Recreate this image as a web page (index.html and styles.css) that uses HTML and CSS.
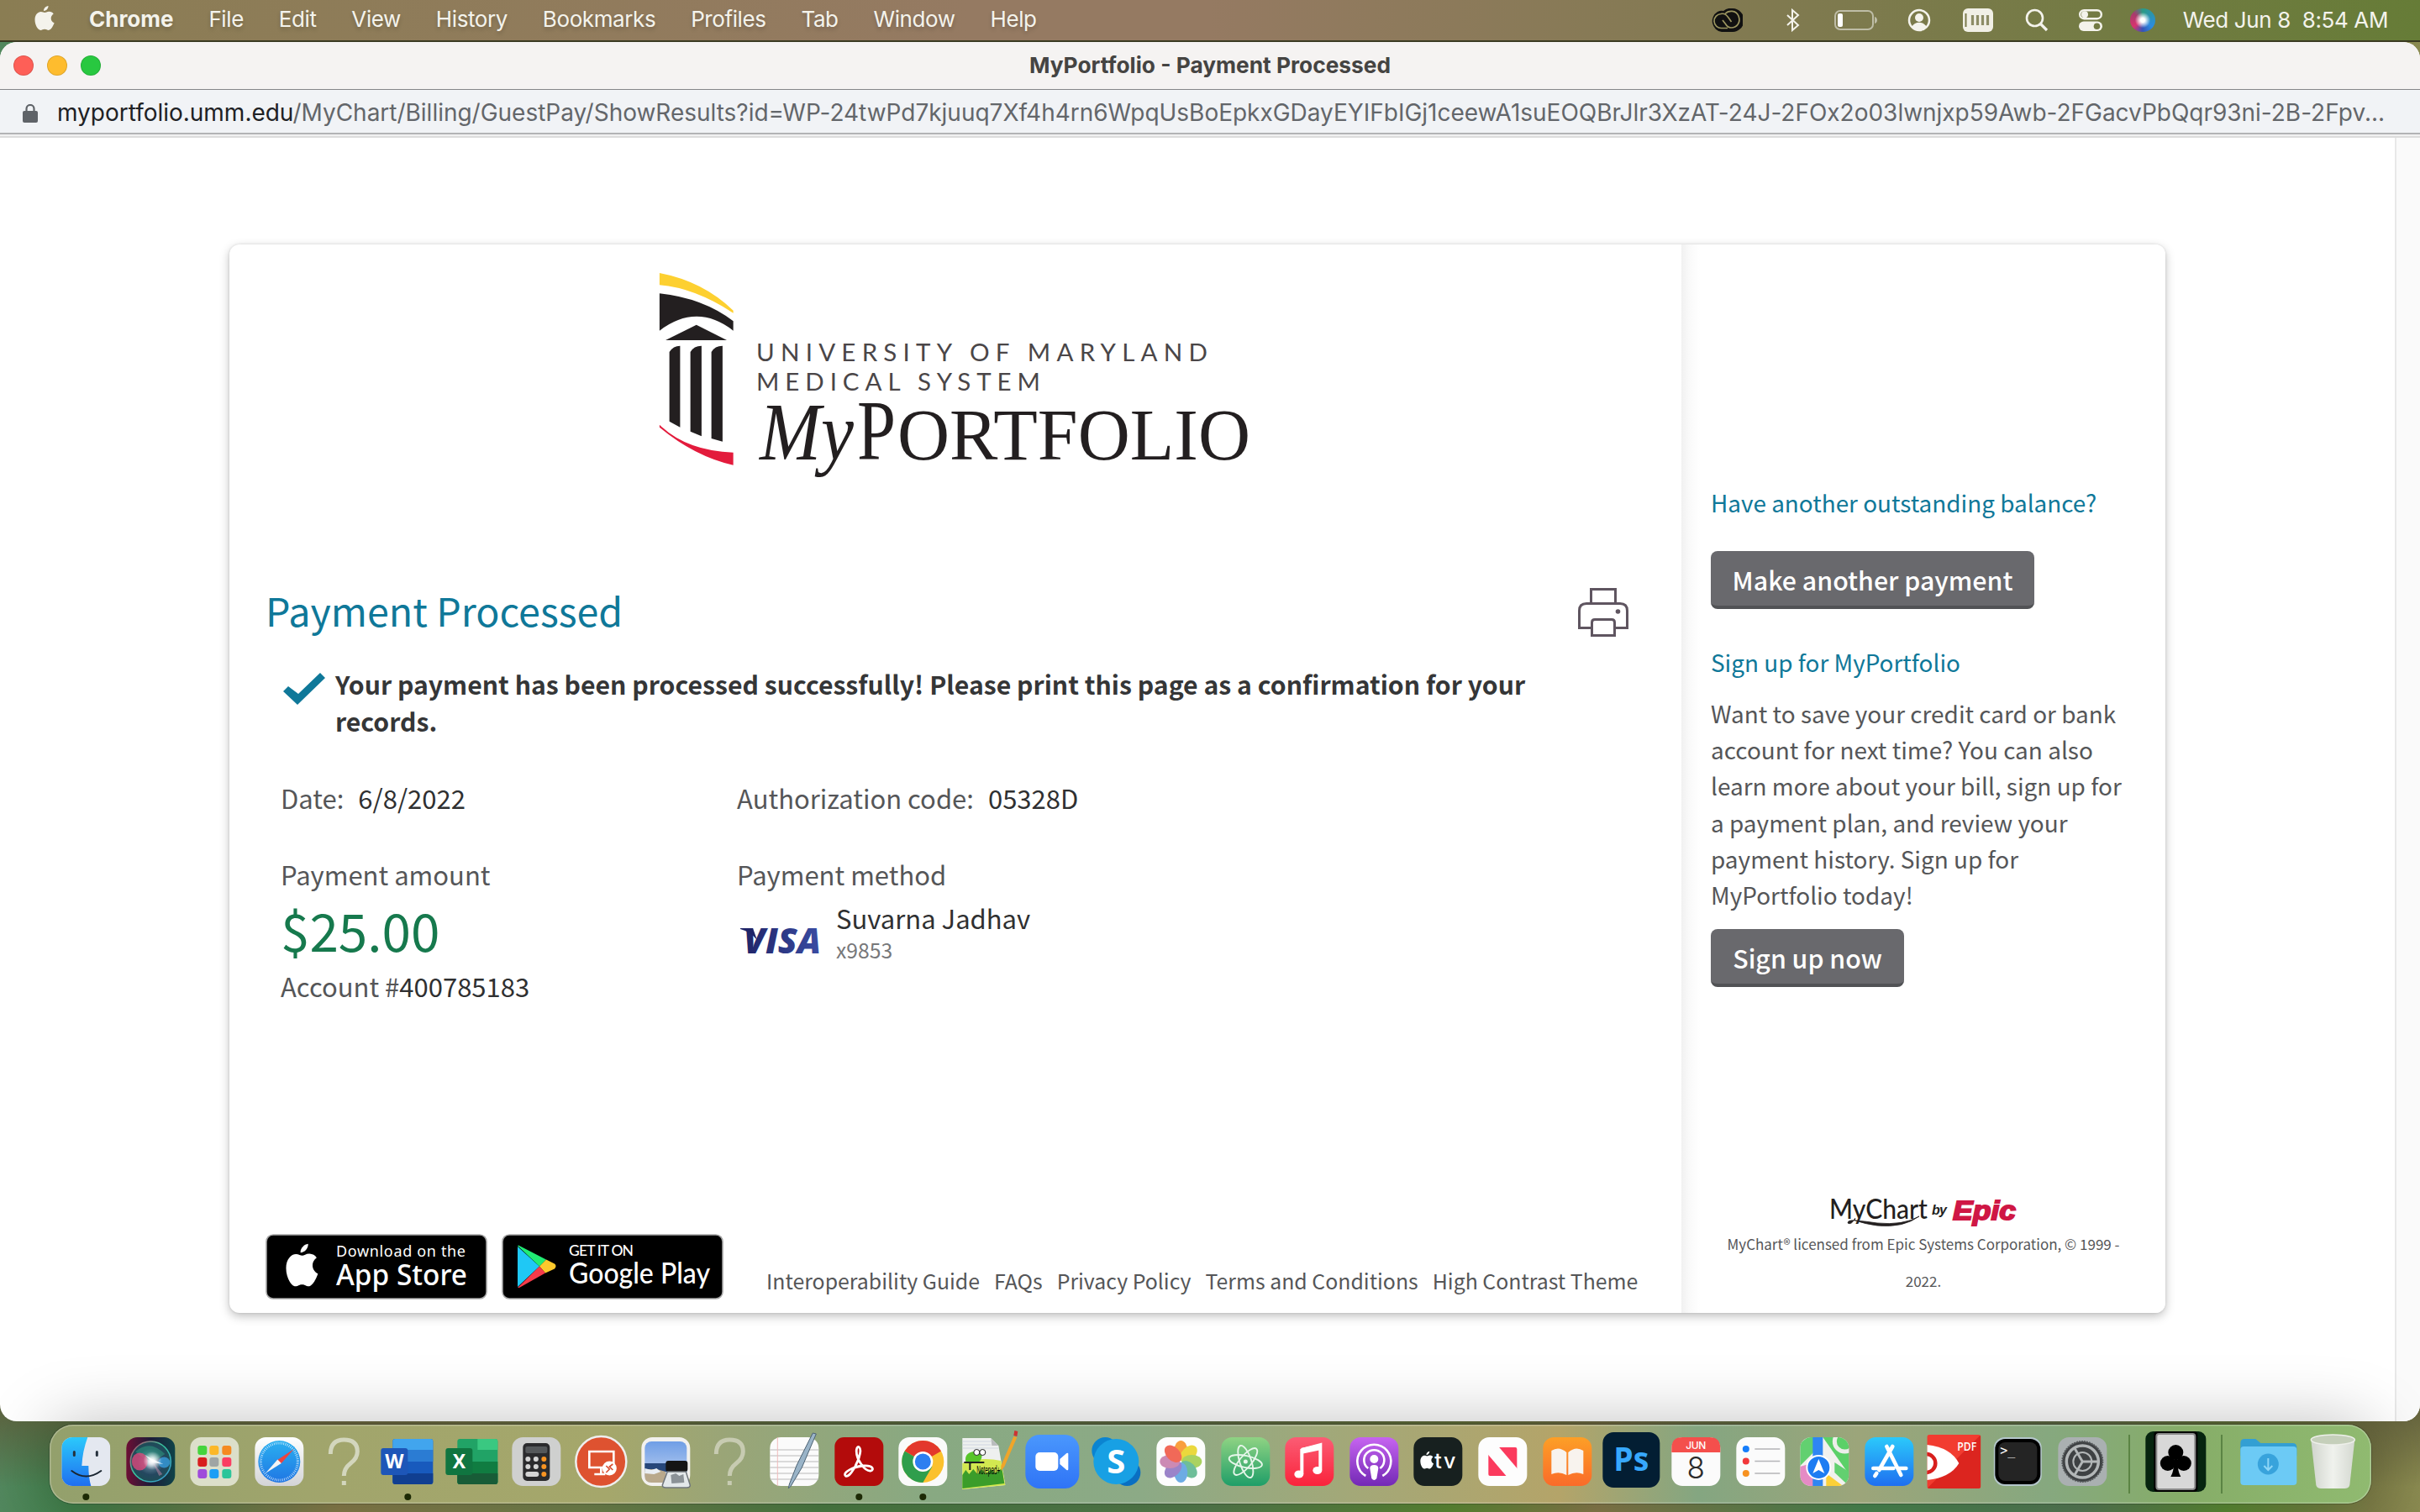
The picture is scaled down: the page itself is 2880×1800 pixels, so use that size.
FILE: index.html
```html
<!DOCTYPE html>
<html lang="en">
<head>
<meta charset="utf-8">
<title>MyPortfolio - Payment Processed</title>
<link rel="stylesheet" href="styles.css">
</head>
<body>
<div class="desktop">
  <header class="menubar">
    <svg class="apple" viewBox="0 0 26 32"><path d="M17.500 1c.2 3-2.600 6-5.500 6C11.700 4.300 14.500 1.300 17.500 1zM13.200 9c1.200 0 2.900-1.400 5.300-1.300 2.200.1 4.100 1 5.200 2.700-4.500 2.900-3.700 9 .9 10.900-1 3-3.800 8.500-6.800 8.600-1.800 0-2.400-1.200-4.700-1.200s-3 1.200-4.700 1.200C5 30 1.500 23.500 1.500 17.500 1.500 11.500 5.200 8 8.700 8c2 0 3.400 1 4.500 1z"/></svg>
    <nav class="menus">
      <span class="app">Chrome</span><span>File</span><span>Edit</span><span>View</span><span>History</span><span>Bookmarks</span><span>Profiles</span><span>Tab</span><span>Window</span><span>Help</span>
    </nav>
    <div class="status">
      <svg class="cc" viewBox="0 0 38 28"><path d="M13 28A13 13 0 0 1 8 4Q12 2 15 3 20-1 26 0A14 14 0 0 1 25 28z" fill="#111"/><g fill="none" stroke="#9c9660" stroke-width="1.700"><path d="M20 23.500H13a8.500 8.500 0 0 1-1-17C16 5.500 19 8 21 11l3.500 5"/><path d="M17 6.500c4-4.500 13-4.500 16 2.500 3 8-2 14-9 14-3 0-5-2-6.500-4.500L14 14"/></g></svg>
      <svg class="bt" viewBox="0 0 18 28"><path d="M2 8l13 12-7 6V2l7 6L2 20" fill="none" stroke="#f4f3ec" stroke-width="2"/></svg>
      <svg class="bat" viewBox="0 0 52 24"><rect x="1" y="1" width="45" height="22" rx="6" fill="none" stroke="#fff" stroke-opacity=".5" stroke-width="2"/><rect x="4" y="4" width="6" height="16" rx="2" fill="#fff"/><path d="M48 8c4 1 4 7 0 8z" fill="#fff" fill-opacity=".5"/></svg>
      <svg class="usr" viewBox="0 0 28 28"><circle cx="14" cy="14" r="12" fill="none" stroke="#f4f3ec" stroke-width="2.500"/><circle cx="14" cy="11" r="5" fill="#f4f3ec"/><path d="M5 22c4-7 14-7 18 0-4 5-14 5-18 0z" fill="#f4f3ec"/></svg>
      <svg class="kbd" viewBox="0 0 36 28"><rect width="36" height="28" rx="6" fill="#f1f0e6"/><path d="M3.500 6v16" stroke="#7b7b4d" stroke-width="2"/><path d="M11.500 8v12M17.500 8v12M23.500 8v12M29.500 8v12" stroke="#8d8d66" stroke-width="3.200"/></svg>
      <svg class="mag" viewBox="0 0 28 28"><circle cx="11.500" cy="11.500" r="9.500" fill="none" stroke="#f4f3ec" stroke-width="2.600"/><path d="M18 18l8 8" stroke="#f4f3ec" stroke-width="3.200"/></svg>
      <svg class="ctl" viewBox="0 0 28 26"><rect x="1.200" y="1.200" width="25.600" height="10" rx="5" fill="none" stroke="#f4f3ec" stroke-width="2.400"/><circle cx="7" cy="6.200" r="4" fill="#f4f3ec"/><rect y="14.500" width="28" height="11.500" rx="5.700" fill="#f4f3ec"/><circle cx="21.500" cy="20.200" r="3.800" fill="#737a44"/></svg>
      <i class="siri-dot"></i>
      <span class="clock">Wed Jun 8&nbsp; 8:54 AM</span>
    </div>
  </header>

  <section class="window">
    <div class="titlebar">
      <div class="lights"><i class="red"></i><i class="amber"></i><i class="green"></i></div>
      <h1 class="wtitle">MyPortfolio - Payment Processed</h1>
      <div class="lights-end"></div>
    </div>
    <div class="urlbar">
      <svg class="lock" viewBox="0 0 18 22"><rect x="0" y="8" width="18" height="14" rx="2" fill="#5f6368"/><path d="M4.500 9V5.500a4.500 4.500 0 0 1 9 0V9" fill="none" stroke="#5f6368" stroke-width="2.200"/></svg>
      <span class="url"><b>myportfolio.umm.edu</b><span>/MyChart/Billing/GuestPay/ShowResults?id=WP-24twPd7kjuuq7Xf4h4rn6WpqUsBoEpkxGDayEYIFbIGj1ceewA1suEOQBrJlr3XzAT-24J-2FOx2o03lwnjxp59Awb-2FGacvPbQqr93ni-2B-2Fpv...</span></span>
    </div>
    <div class="viewport">
      <div class="page">
        <div class="card">
          <main class="main">
            <svg class="logo" viewBox="0 0 800 300">
              <g transform="scale(.5102 .33333)">
                <path d="M88 75Q190 105 260 209V218Q170 128 88 118z" fill="#fdd030"/>
                <path d="M88 148Q190 165 260 247V281Q175 180 88 281z" fill="#231f20"/>
                <path d="M174 260L245 315H102z" fill="#231f20"/>
                <path d="M111 357Q120 335 136 335V626L111 605zM160 357Q168 335 186 335V658L160 641zM209 357Q217 335 235 335V677L209 666z" fill="#231f20"/>
                <path d="M88 617Q150 710 260 716V761Q170 730 88 626z" fill="#e31b3c"/>
              </g>
              <g fill="#4a4648" font-family="Lato, sans-serif" font-size="29.500">
                <text x="160" y="129.500" textLength="537">UNIVERSITY OF MARYLAND</text>
                <text x="160" y="165" textLength="338">MEDICAL SYSTEM</text>
              </g>
              <g fill="#231f20" font-family="'Liberation Serif', serif">
                <text x="164" y="246.500" font-size="97" font-style="italic" textLength="112" lengthAdjust="spacingAndGlyphs">My</text>
                <text x="280" y="246.500" font-size="101" textLength="46" lengthAdjust="spacingAndGlyphs">P</text>
                <text x="328" y="246.500" font-size="87" textLength="420" lengthAdjust="spacingAndGlyphs">ORTFOLIO</text>
              </g>
            </svg>
            <div class="head">
              <h2>Payment Processed</h2>
              <svg class="printer" viewBox="0 0 60 58"><g fill="none" stroke="#5f5560" stroke-width="3"><path d="M15.500 18V1.500h29V18"/><path d="M15 47.500H1.500V27q0-8.500 8.500-8.500h40q8.500 0 8.500 8.500v20.500H45"/><path d="M16.500 56.500V41q0-3.500 3.500-3.500h20q3.500 0 3.500 3.500v15.500z"/></g><circle cx="47.500" cy="28" r="2.800" fill="#5f5560"/></svg>
            </div>
            <div class="msg">
              <svg class="check" viewBox="0 0 50 38"><path d="M0 22l6-6 12 9L44 0l6 6-33 32z" fill="#0f7899"/></svg>
              <p>Your payment has been processed successfully! Please print this page as a confirmation for your<br>records.</p>
            </div>
            <div class="details">
              <div class="row"><span>Date:</span><span class="v">6/8/2022</span></div>
              <div class="row"><span>Authorization code:</span><span class="v">05328D</span></div>
              <div class="amount">
                <div>Payment amount</div>
                <div class="sum">$25.00</div>
                <div class="acct">Account #<span class="v">400785183</span></div>
              </div>
              <div class="method">
                <div>Payment method</div>
                <div class="payer">
                  <svg class="visa" viewBox="0 0 96 34"><defs><linearGradient id="vg"><stop offset="0" stop-color="#1f2468"/><stop offset="1" stop-color="#3a4ca3"/></linearGradient></defs><text x="4" y="32" textLength="92" lengthAdjust="spacingAndGlyphs" fill="url(#vg)" font-family="'Open Sans', sans-serif" font-weight="800" font-style="italic" font-size="42">VISA</text><path d="M0 2h15l5 14Q12 6 0 3z" fill="#1f2468"/></svg>
                  <div><div class="name v">Suvarna Jadhav</div><div class="last4">x9853</div></div>
                </div>
              </div>
            </div>
            <footer class="foot">
              <div class="badge"><svg viewBox="0 0 264 78"><rect x="1" y="1" width="262" height="76" rx="8" fill="#000" stroke="#a6a6a6" stroke-width="1.600"/><path transform="translate(22 10) scale(1.640 1.750)" fill="#fff" d="M17.500 1c.2 3-2.600 6-5.500 6C11.700 4.300 14.500 1.300 17.500 1zM13.200 9c1.200 0 2.900-1.400 5.300-1.300 2.200.1 4.100 1 5.200 2.700-4.500 2.900-3.700 9 .9 10.900-1 3-3.800 8.500-6.800 8.600-1.800 0-2.400-1.200-4.700-1.200s-3 1.200-4.700 1.200C5 30 1.500 23.500 1.500 17.500 1.500 11.500 5.200 8 8.700 8c2 0 3.400 1 4.500 1z"/><g fill="#fff" font-family="'Noto Sans', sans-serif"><text x="84" y="26.500" font-size="18" textLength="154">Download on the</text><text x="84" y="61" font-size="35" font-weight="500" textLength="156" lengthAdjust="spacingAndGlyphs">App Store</text></g></svg></div>
              <div class="badge"><svg viewBox="0 0 264 78"><rect x="1" y="1" width="262" height="76" rx="8" fill="#000" stroke="#a6a6a6" stroke-width="1.600"/><path d="M19 15v48l26-24.500z" fill="#1fc8f5"/><path d="M19 14l1-.5 33 17-8 8z" fill="#20ec74"/><path d="M45 38.500l8-8 10 5q3 2.500 0 6l-11 5z" fill="#fdc92c"/><path d="M19 64l26-25.500 7 8L21 64z" fill="#f43b4a"/><g fill="#fff" font-family="Lato, sans-serif" font-weight="500"><text x="80" y="26" font-size="17.500" textLength="77">GET IT ON</text><text x="80" y="59" font-size="34" textLength="168" lengthAdjust="spacingAndGlyphs">Google Play</text></g></svg></div>
              <nav class="links"><span>Interoperability Guide</span><span>FAQs</span><span>Privacy Policy</span><span>Terms and Conditions</span><span>High Contrast Theme</span></nav>
            </footer>
          </main>
          <aside class="side">
            <h3>Have another outstanding balance?</h3>
            <button class="btn b1">Make another payment</button>
            <h3 class="second">Sign up for MyPortfolio</h3>
            <p>Want to save your credit card or bank<br>account for next time? You can also<br>learn more about your bill, sign up for<br>a payment plan, and review your<br>payment history. Sign up for<br>MyPortfolio today!</p>
            <button class="btn b2">Sign up now</button>
            <div class="legal">
              <svg class="epic" viewBox="0 0 224 32"><text x="0" y="24" font-family="Lato, sans-serif" font-weight="500" font-size="33" fill="#231f20" textLength="117" lengthAdjust="spacingAndGlyphs">MyChart</text><path d="M31 23q-5 9-9 6 0-4 10-3 12 1 25 3 31 3 50-8-19 14-50 11-15-2-26-6" fill="#231f20" stroke="#231f20" stroke-width=".8"/><text x="122" y="18.500" font-family="'Liberation Sans', sans-serif" font-weight="700" font-style="italic" font-size="16" fill="#231f20" textLength="18">by</text><text x="147" y="25" font-family="'Liberation Sans', sans-serif" font-weight="700" font-style="italic" font-size="31" fill="#cf1745" stroke="#cf1745" stroke-width="1.800" textLength="75" lengthAdjust="spacingAndGlyphs">Epic</text></svg>
              <div class="lic">MyChart® licensed from Epic Systems Corporation, © 1999 -<br>2022.</div>
            </div>
          </aside>
        </div>
      </div>
      <div class="scroll"></div>
    </div>
  </section>

  <div class="dock">
    <svg viewBox="0 0 76 94"><defs>
      <linearGradient id="gBlue" x2="0" y2="1"><stop stop-color="#2bc9fb"/><stop offset="1" stop-color="#1f6ff0"/></linearGradient>
      <radialGradient id="gSiri"><stop stop-color="#c9d4e6"/><stop offset=".3" stop-color="#55788f"/><stop offset=".65" stop-color="#24475f"/><stop offset="1" stop-color="#1d4d56"/></radialGradient>
      <radialGradient id="gGlow"><stop stop-color="#fff"/><stop offset=".3" stop-color="#fff" stop-opacity=".8"/><stop offset="1" stop-color="#fff" stop-opacity="0"/></radialGradient>
      <linearGradient id="gSiriRing" x2="1" y2="1"><stop stop-color="#c23a62"/><stop offset=".45" stop-color="#35c9a0"/><stop offset="1" stop-color="#3a8fd0"/></linearGradient>
      <linearGradient id="gSiriBg"><stop stop-color="#6d0f35"/><stop offset=".5" stop-color="#1d1c38"/><stop offset="1" stop-color="#0e4349"/></linearGradient>
      <linearGradient id="gRed" x2="0" y2="1"><stop stop-color="#fb5c74"/><stop offset="1" stop-color="#fa233b"/></linearGradient>
      <linearGradient id="gGreen" x2="0" y2="1"><stop stop-color="#8fd383"/><stop offset="1" stop-color="#1f9e68"/></linearGradient>
      <linearGradient id="gPurple" x2="0" y2="1"><stop stop-color="#c664f0"/><stop offset="1" stop-color="#7329b5"/></linearGradient>
      <linearGradient id="gOrange" x2="0" y2="1"><stop stop-color="#fd9f26"/><stop offset="1" stop-color="#fa6b2a"/></linearGradient>
      <linearGradient id="gZoom" x2="0" y2="1"><stop stop-color="#4a97fd"/><stop offset="1" stop-color="#2f74f6"/></linearGradient>
      <linearGradient id="gTrash"><stop stop-color="#d4d6d2"/><stop offset=".5" stop-color="#f5f5f4"/><stop offset="1" stop-color="#d8dad6"/></linearGradient>
      <linearGradient id="gWhite" x2="0" y2="1"><stop stop-color="#fff"/><stop offset="1" stop-color="#d3d4d6"/></linearGradient>
      <linearGradient id="gSafari" x2="0" y2="1"><stop stop-color="#2bb0f0"/><stop offset="1" stop-color="#1f76e4"/></linearGradient>
      <linearGradient id="gSky" x2="0" y2="1"><stop stop-color="#6f9ee6"/><stop offset="1" stop-color="#c3d4f0"/></linearGradient>
      <clipPath id="sq"><rect x="9" y="15" width="58" height="58" rx="13"/></clipPath>
      <clipPath id="pdf"><rect x="6" y="12" width="64" height="64" rx="3"/></clipPath></defs>
      <g clip-path="url(#sq)"><path d="M9 15h58v58H9z" fill="#e4e8f0"/><path d="M9 15h31q-6 16-7 34h8q0 14 3 24H9z" fill="url(#gBlue)"/></g><path d="M24 32.500v4M51 32.500v4" stroke="#26313c" stroke-width="3" stroke-linecap="round"/><path d="M21 55q17 13 35 0" fill="none" stroke="#1a2530" stroke-width="2" stroke-linecap="round"/><circle class="run" cx="38" cy="86" r="4"/></svg>
    <svg viewBox="0 0 76 94"><rect x="9" y="15" width="58" height="58" rx="13" fill="url(#gSiriBg)"/><circle cx="38" cy="44" r="24" fill="url(#gSiri)" stroke="url(#gSiriRing)" stroke-width="1.600"/><path d="M20 32q17-15 35 3-8 6-15 8-12-2-20-11z" fill="#2fae86" opacity=".45"/><ellipse cx="25" cy="44" rx="9.500" ry="10.500" fill="#e8487e" opacity=".75"/><ellipse cx="54" cy="45" rx="7" ry="6.500" fill="#3aa8f0" opacity=".7"/><path d="M40 44l12 15-4 2z" fill="#c58aa8" opacity=".5"/><circle cx="40" cy="43" r="11" fill="url(#gGlow)"/><path d="M31 36l9 5 13 6-13-2z" fill="#fff" opacity=".8"/></svg>
    <svg viewBox="0 0 76 94"><rect x="9" y="15" width="58" height="58" rx="13" fill="#dcdfca"/><g><rect x="18" y="25" width="11" height="11" rx="3" fill="#45d43d"/><rect x="32" y="25" width="11" height="11" rx="3" fill="#fcb827"/><rect x="47" y="25" width="11" height="11" rx="3" fill="#f58a20"/><rect x="18" y="39" width="11" height="11" rx="3" fill="#d81e1e"/><rect x="32" y="39" width="11" height="11" rx="3" fill="#9fa5a4"/><rect x="47" y="39" width="11" height="11" rx="3" fill="#fb3e62"/><rect x="18" y="53" width="11" height="11" rx="3" fill="#9f4bdb"/><rect x="32" y="53" width="11" height="11" rx="3" fill="#1c9ef5"/><rect x="47" y="53" width="11" height="11" rx="3" fill="#2bc59a"/></g></svg>
    <svg viewBox="0 0 76 94"><rect x="9" y="15" width="58" height="58" rx="13" fill="url(#gWhite)"/><circle cx="38" cy="44" r="25" fill="url(#gSafari)"/><circle cx="38" cy="44" r="22" fill="none" stroke="#fff" stroke-opacity=".75" stroke-width="3" stroke-dasharray=".8 1.500"/><path d="M55.500 29L36 42l4 4.500z" fill="#f0433d"/><path d="M21.500 58L36 41.500l4.500 4.500z" fill="#f4f4f4"/></svg>
    <svg viewBox="0 0 76 94"><path d="M22 35q0-17 16-17t16 14q0 8-8 14-8 6-8 15M38 67v5" fill="none" stroke="#d3d6bd" stroke-width="5"/></svg>
    <svg viewBox="0 0 76 94"><rect x="20" y="17" width="48" height="54" rx="3" fill="#185abd"/><path d="M20 30V20q0-3 3-3h42q3 0 3 3v10z" fill="#41a5ee"/><path d="M20 30h48v14H20z" fill="#2b7cd3"/><path d="M20 58h48v10q0 3-3 3H23q-3 0-3-3z" fill="#103f91"/><rect x="6" y="28" width="32" height="32" rx="3" fill="#1d56b8"/><text x="22" y="52" text-anchor="middle" class="glyph" font-size="23">W</text><circle class="run" cx="38" cy="86" r="4"/></svg>
    <svg viewBox="0 0 76 94"><rect x="20" y="17" width="48" height="54" rx="3" fill="#21a366"/><path d="M44 17h21q3 0 3 3v10H44z" fill="#3ac881"/><path d="M20 44h48v24q0 3-3 3H23q-3 0-3-3z" fill="#107c41"/><path d="M20 58h48v10q0 3-3 3H23q-3 0-3-3z" fill="#185c37"/><rect x="6" y="28" width="32" height="32" rx="3" fill="#107540"/><text x="22" y="52" text-anchor="middle" class="glyph" font-size="23">X</text></svg>
    <svg viewBox="0 0 76 94"><rect x="9" y="15" width="58" height="58" rx="13" fill="#cfd0cf"/><rect x="22" y="22" width="32" height="45" rx="5" fill="#2b2b2d"/><rect x="25" y="26" width="26" height="8" rx="2" fill="#55585a"/><g fill="#d5d5d5"><circle cx="28" cy="41" r="3"/><circle cx="37.500" cy="41" r="3"/><circle cx="28" cy="50" r="3"/><circle cx="37.500" cy="50" r="3"/><rect x="25" y="56" width="16" height="6" rx="3"/></g><g fill="#f89422"><circle cx="47" cy="41" r="3"/><circle cx="47" cy="50" r="3"/><circle cx="47" cy="59" r="3"/></g></svg>
    <svg viewBox="0 0 76 94"><circle cx="38" cy="44" r="30" fill="#de5230" stroke="#eee" stroke-width="2.500"/><path d="M24 32h29v19H24zM38 51v7M30 59h13" fill="none" stroke="#fff" stroke-width="2.600"/><circle cx="48" cy="52" r="8.500" fill="#fff"/><path d="M44 49l4 4-4 4M52 47l-4 3 4 4" fill="none" stroke="#d64c30" stroke-width="1.600"/></svg>
    <svg viewBox="0 0 76 94"><rect x="9" y="15" width="58" height="58" rx="13" fill="#f2f1ee"/><rect x="13" y="20" width="50" height="49" rx="8" fill="url(#gSky)"/><path d="M13 46h50v10H13z" fill="#27477a"/><path d="M13 54q12-3 25 2v13H21q-8 0-8-8z" fill="#b9a98c"/><path d="M13 52l8 2 6-2 5 4-8 3-11-1z" fill="#e9eef3"/><rect x="38" y="43" width="26" height="13" rx="3" fill="#151515"/><path d="M40 56h22l5 16q0 3-4 3H38q-4 0-4-3z" fill="#e3e8ea" stroke="#70767b" stroke-width="1.500"/><path d="M44 60l6-2 4 3 5-2 1 10-15 1z" fill="#8b9297"/></svg>
    <svg viewBox="0 0 76 94"><path d="M22 35q0-17 16-17t16 14q0 8-8 14-8 6-8 15M38 67v5" fill="none" stroke="#c7cbb1" stroke-width="5"/></svg>
    <svg viewBox="0 0 76 94"><rect x="9" y="15" width="58" height="58" rx="13" fill="#fbfbfb"/><path d="M9 30h58M9 37h58M9 44h58M9 51h58M9 58h58M9 65h58" stroke="#b9b9b9" stroke-width="1"/><path d="M18 15v58" stroke="#f0bcbc"/><path d="M60 10l4 1-17 40-13 22-3 3 1-5 9-23z" fill="#9ab4c8" stroke="#4c6273" stroke-width="1"/></svg>
    <svg viewBox="0 0 76 94"><rect x="9" y="15" width="58" height="58" rx="11" fill="#b30b0b"/><path d="M22 61c-4-4 9-11 21-12s13 5 9 6c-7 1-18-14-17-25 1-7 6-3 4 5-2 10-12 29-17 26z" fill="none" stroke="#fff" stroke-width="2.800"/><circle class="run" cx="38" cy="86" r="4"/></svg>
    <svg viewBox="0 0 76 94"><rect x="9" y="15" width="58" height="58" rx="13" fill="#fafafa"/><circle cx="38" cy="44" r="25" fill="#fbc12d"/><path d="M38 44L16.300 31.500a25 25 0 0 1 43.400 0z" fill="#e3382c"/><path d="M16.300 31.500A25 25 0 0 0 38 69l11-19-11-6z" fill="#2f9e4c"/><path d="M16.300 31.500L38 32h21.700z" fill="#e3382c"/><circle cx="38" cy="44" r="12" fill="#fff"/><circle cx="38" cy="44" r="9.500" fill="#2d7ff0"/><circle class="run" cx="38" cy="86" r="4"/></svg>
    <svg viewBox="0 0 76 94"><path d="M8 16h34l9 9 8 47-51 5z" fill="#eef0ef"/><path d="M42 16l9 9h-8z" fill="#b9bcbd"/><path d="M8 20h34M8 24h34M8 28h43" stroke="#cfd6e0"/><path d="M8 46q22-8 46-3l5 29-51 5z" fill="#d3e850"/><path d="M8 60l4-6 4 5 5-6 5 6 5-6 5 6 6-6 5 5 8-6 3 18-50 6z" fill="#3b9d2a"/><path d="M12 44q-2-10 9-12 12-2 10 7-2 8-10 6-3 4-9-1z" fill="#58c52a"/><circle cx="25" cy="33" r="3.500" fill="#fff" stroke="#222"/><circle cx="32" cy="33" r="3.500" fill="#fff" stroke="#222"/><path d="M10 45h24M17 46v8" stroke="#222" stroke-width="2"/><text x="25" y="59" font-size="15" font-family="'Liberation Sans', sans-serif" textLength="28" lengthAdjust="spacingAndGlyphs">Notepad+</text><path d="M69 14l4 1-15 35-4 5v-6z" fill="#f0a529"/><path d="M70 7l4 1-1 6-4-1z" fill="#c33"/></svg>
    <svg viewBox="0 0 76 94"><rect x="6" y="12" width="64" height="64" rx="17" fill="url(#gZoom)"/><rect x="18" y="33" width="27" height="22" rx="5" fill="#fff"/><path d="M47 41l8-7q2-1 2 1v18q0 2-2 1l-8-7z" fill="#fff"/></svg>
    <svg viewBox="0 0 76 94"><circle cx="25" cy="31" r="16" fill="#0b84d1"/><circle cx="51" cy="57" r="16" fill="#0a6fc2"/><circle cx="38" cy="44" r="27" fill="#18a0e4"/><text x="38" y="58" text-anchor="middle" class="glyph" font-size="40">S</text></svg>
    <svg viewBox="0 0 76 94"><rect x="9" y="15" width="58" height="58" rx="13" fill="#fdfdfd"/><g opacity=".85"><ellipse cx="38" cy="31" rx="8" ry="12" fill="#f98f1e"/><ellipse cx="38" cy="31" rx="8" ry="12" fill="#e8d21c" transform="rotate(45 38 44)"/><ellipse cx="38" cy="31" rx="8" ry="12" fill="#9ccb45" transform="rotate(90 38 44)"/><ellipse cx="38" cy="31" rx="8" ry="12" fill="#56b488" transform="rotate(135 38 44)"/><ellipse cx="38" cy="31" rx="8" ry="12" fill="#559fe0" transform="rotate(180 38 44)"/><ellipse cx="38" cy="31" rx="8" ry="12" fill="#8a6fc0" transform="rotate(225 38 44)"/><ellipse cx="38" cy="31" rx="8" ry="12" fill="#c476a8" transform="rotate(270 38 44)"/><ellipse cx="38" cy="31" rx="8" ry="12" fill="#f0503c" transform="rotate(315 38 44)"/></g></svg>
    <svg viewBox="0 0 76 94"><rect x="9" y="15" width="58" height="58" rx="13" fill="url(#gGreen)"/><g fill="none" stroke="#e6f6ea" stroke-width="1.900"><ellipse cx="38" cy="44" rx="20" ry="7" transform="rotate(12 38 44)"/><ellipse cx="38" cy="44" rx="20" ry="7" transform="rotate(72 38 44)"/><ellipse cx="38" cy="44" rx="20" ry="7" transform="rotate(130 38 44)"/></g><circle cx="38" cy="44" r="2.500" fill="#e6f6ea"/></svg>
    <svg viewBox="0 0 76 94"><rect x="9" y="15" width="58" height="58" rx="13" fill="url(#gRed)"/><path d="M29 30l22-6v30M29 59V29" fill="none" stroke="#fff" stroke-width="4"/><path d="M28 28l24-5v7l-24 5z" fill="#fff"/><ellipse cx="25.500" cy="59" rx="5.500" ry="4.500" fill="#fff"/><ellipse cx="47.500" cy="54.500" rx="5.500" ry="4.500" fill="#fff"/></svg>
    <svg viewBox="0 0 76 94"><rect x="9" y="15" width="58" height="58" rx="13" fill="url(#gPurple)"/><g fill="none" stroke="#fff" stroke-width="2.600"><path d="M28 61a20 20 0 1 1 20 0"/><path d="M31 52a12 12 0 1 1 14 0"/></g><circle cx="38" cy="41" r="5" fill="#fff"/><path d="M33 52q0-4 5-4t5 4l-2 12q-3 4-6 0z" fill="#fff"/></svg>
    <svg viewBox="0 0 76 94"><rect x="9" y="15" width="58" height="58" rx="13" fill="#17201f"/><path transform="translate(16 31) scale(.68 .72)" fill="#fff" d="M17.500 1c.2 3-2.600 6-5.500 6C11.700 4.300 14.500 1.300 17.500 1zM13.200 9c1.200 0 2.900-1.400 5.300-1.300 2.200.1 4.100 1 5.200 2.700-4.500 2.900-3.700 9 .9 10.900-1 3-3.800 8.500-6.800 8.600-1.800 0-2.400-1.200-4.700-1.200s-3 1.200-4.700 1.200C5 30 1.500 23.500 1.500 17.500 1.500 11.500 5.200 8 8.700 8c2 0 3.400 1 4.500 1z"/><text x="34" y="52" fill="#fff" font-family="Inter, sans-serif" font-weight="500" font-size="25" textLength="25">tv</text></svg>
    <svg viewBox="0 0 76 94"><rect x="9" y="15" width="58" height="58" rx="13" fill="#fdfdfd"/><rect x="21" y="27" width="34" height="34" rx="2" fill="#fb3a5d"/><path d="M20 26h13l23 27v9H43L20 35z" fill="#fdfdfd"/></svg>
    <svg viewBox="0 0 76 94"><rect x="9" y="15" width="58" height="58" rx="13" fill="url(#gOrange)"/><path d="M37 33q-9-8-18-2v28q9-4 18 1zM39 33q9-8 18-2v28q-9-4-18 1z" fill="#f8f3ee"/></svg>
    <svg viewBox="0 0 76 94"><rect x="4" y="9" width="68" height="66" rx="13" fill="#031e33"/><text x="38" y="55" text-anchor="middle" fill="#37a8fd" font-family="'Open Sans', sans-serif" font-weight="700" font-size="40" textLength="42" lengthAdjust="spacingAndGlyphs">Ps</text></svg>
    <svg viewBox="0 0 76 94"><rect x="9" y="15" width="58" height="58" rx="13" fill="#fbfbfb"/><path d="M9 33v-5q0-13 13-13h32q13 0 13 13v5z" fill="#f44f4c"/><text x="38" y="29" text-anchor="middle" fill="#fff" font-family="Inter, sans-serif" font-weight="500" font-size="12" textLength="24">JUN</text><text x="38" y="64" text-anchor="middle" fill="#2b2b2b" font-family="Inter, sans-serif" font-weight="300" font-size="35">8</text></svg>
    <svg viewBox="0 0 76 94"><rect x="9" y="15" width="58" height="58" rx="13" fill="#fbfbfb"/><path d="M31 29h30M31 43.500h30M31 58h30" stroke="#b5b5b8" stroke-width="1.400"/><circle cx="20.500" cy="29" r="4" fill="#167efb"/><circle cx="20.500" cy="43.500" r="4" fill="#f2383b"/><circle cx="20.500" cy="58" r="4" fill="#f79221"/></svg>
    <svg viewBox="0 0 76 94"><g clip-path="url(#sq)"><path d="M9 15h58v58H9z" fill="#f1f1ee"/><path d="M36 15h31v44z" fill="#5bd068"/><path d="M9 22v27l17-17V15h-8z" fill="#62d070"/><path d="M9 50l26-8v31H9z" fill="#e58bc5"/><path d="M40 73V58l20 15z" fill="#fbd038"/><path d="M67 73V56L50 45v12z" fill="#62d070"/><path d="M24 15h12v58H24z" fill="#2f86f2"/><circle cx="62" cy="20" r="12" fill="none" stroke="#eceeea" stroke-width="5"/></g><circle cx="31" cy="51" r="14" fill="#1d7cf2" stroke="#fff" stroke-width="2"/><path d="M31 41l7 17-7-4-7 4z" fill="#fff"/></svg>
    <svg viewBox="0 0 76 94"><rect x="9" y="15" width="58" height="58" rx="13" fill="url(#gBlue)"/><path d="M42 26L26 54M35 26l17 34M19 52h24M49 52h9M23 58l-2 3" stroke="#fff" stroke-width="4.600" stroke-linecap="round"/></svg>
    <svg viewBox="0 0 76 94"><g clip-path="url(#pdf)"><path d="M6 12h64v64H6z" fill="#f23c30"/><path d="M6 76l64-64v64z" fill="#dc251f"/><path d="M6 24q28 3 38 22-10 17-38 20z" fill="#fff"/><circle cx="5" cy="46" r="11" fill="none" stroke="#d81f1d" stroke-width="4.500"/></g><text x="42" y="31" fill="#fff" font-family="'Open Sans', sans-serif" font-weight="600" font-size="15" textLength="23" lengthAdjust="spacingAndGlyphs">PDF</text></svg>
    <svg viewBox="0 0 76 94"><rect x="9.500" y="15" width="57" height="58" rx="13" fill="#b4c6cb"/><rect x="11" y="17" width="54" height="54" rx="12" fill="#000"/><rect x="15" y="21" width="46" height="46" rx="8" fill="#242424"/><text x="17" y="36" fill="#fff" font-family="'DejaVu Sans Mono', monospace" font-size="15">&gt;_</text></svg>
    <svg viewBox="0 0 76 94"><rect x="9" y="15" width="58" height="58" rx="13" fill="#aab0b1"/><circle cx="38" cy="44" r="24" fill="#3e4143" stroke="#55595b" stroke-width="2" stroke-dasharray="2 1"/><g fill="none" stroke="#b2b6b7"><circle cx="38" cy="44" r="19" stroke-width="3.500"/><circle cx="38" cy="44" r="11" stroke-width="2"/><path d="M38 44h19M38 44l-10-17M38 44l-10 17" stroke-width="3"/></g></svg>
    <i class="sep"></i>
    <svg viewBox="0 0 76 94"><rect x="2" y="8" width="72" height="72" rx="9" fill="#06240f"/><rect x="12" y="8" width="52" height="72" rx="4" fill="#000"/><rect x="15" y="11" width="46" height="66" rx="3" fill="#d8d8d8" stroke="#888" stroke-width="2"/><g fill="#000"><circle cx="38" cy="33" r="9"/><circle cx="28.500" cy="46" r="9"/><circle cx="47.500" cy="46" r="9"/><path d="M36 40h4q0 16 4 22H32q4-6 4-22z"/></g></svg>
    <i class="sep"></i>
    <svg viewBox="0 0 76 94"><path d="M5 22q0-5 5-5h13l6 5h38q5 0 5 5v10H5z" fill="#339fd3"/><rect x="5" y="26" width="67" height="46" rx="4" fill="#6ccaf5"/><circle cx="38" cy="47" r="12.500" fill="#38a3dc"/><path d="M38 40v13M33 49l5 5 5-5" fill="none" stroke="#8ed6f7" stroke-width="2"/></svg>
    <svg viewBox="0 0 76 94"><path d="M12 18h52l-6 54q-1 4-6 4H24q-5 0-6-4z" fill="url(#gTrash)" opacity=".95"/><ellipse cx="38" cy="18" rx="26" ry="6" fill="#c5cfba" stroke="#eef0ea" stroke-width="1.500"/></svg>
  </div>
</div>
</body>
</html>
```
FILE: styles.css
```css
* { box-sizing: border-box; }
body { margin: 0; width: 2880px; height: 1800px; overflow: hidden; }
h1, h2, h3, p { margin: 0; font-weight: 400; }
svg { display: block; flex: none; }

.desktop {
  width: 2880px; height: 1800px; display: flex; flex-direction: column;
  font-family: "Noto Sans CJK SC", sans-serif; color: #555658;
  background:
    linear-gradient(#5e5c3a, rgba(94,92,58,0)) 0 1660px / 100% 110px no-repeat,
    linear-gradient(90deg, #52885e 0, #41804a 3%, #8a7f4c 14%, #73854e 24%, #4d7f45 34%, #57804f 50%, #5f8d36 60%, #8a7d4c 66%, #4a8a52 77%, #577c56 86%, #5c8d35 92%, #7d7d47 98%, #8a8a50 100%);
}

/* menu bar */
.menubar {
  height: 50px; flex: none; display: flex; align-items: flex-start; padding-left: 40px;
  font-family: Inter, sans-serif; font-size: 26px; line-height: 46px; color: #f4f3ec;
  background: linear-gradient(90deg, #8a7d53 0, #957a62 40%, #957a62 50%, #7e7a4e 76%, #667c37 100%);
  border-bottom: 2px solid #3a3a22; white-space: nowrap;
}
.apple { width: 26px; height: 32px; margin-top: 6px; fill: #f4f3ec; }
.menus { display: flex; gap: 41.850px; margin-left: 40px; letter-spacing: -.4px; text-shadow: 0 3px 5px rgba(0,0,0,.2); }
.app { font-weight: 700; letter-spacing: 0; }
.status { display: flex; align-items: center; height: 48px; margin-left: auto; padding-right: 38px; }
.cc { width: 38px; height: 28px; }
.bt { width: 18px; height: 28px; margin-left: 51px; }
.bat { width: 52px; height: 24px; margin-left: 40px; }
.usr { width: 28px; height: 28px; margin-left: 35px; }
.kbd { width: 36px; height: 28px; margin-left: 38px; }
.mag { width: 28px; height: 28px; margin-left: 38px; }
.ctl { width: 28px; height: 26px; margin-left: 36px; }
.siri-dot { width: 30px; height: 28px; margin-left: 33px; border-radius: 50%; background: radial-gradient(circle at 50% 50%, #fff 0 12%, transparent 45%), conic-gradient(#2a9b86, #2c8be0 35%, #3454b8 50%, #d8336f 65%, #a83b6c 85%, #2a9b86); }
.clock { margin-left: 33px; letter-spacing: -.380px; }

/* browser window */
.window { height: 1642px; flex: none; display: flex; flex-direction: column; background: #fff; border-radius: 20px; overflow: hidden; }
.titlebar { height: 57px; flex: none; display: flex; align-items: center; justify-content: space-between; padding-left: 16px; background: #f5f3f2; border-bottom: 1px solid #858688; font-family: Inter, sans-serif; }
.lights { width: 120px; display: flex; gap: 16px; }
.lights-end { width: 136px; }
.lights i { width: 24px; height: 24px; border-radius: 50%; border: 1px solid rgba(0,0,0,.12); }
.red { background: #fe5f57; }
.amber { background: #febc2e; }
.green { background: #28c840; }
.wtitle { font-size: 26.300px; font-weight: 700; color: #454442; line-height: 54px; white-space: nowrap; }
.urlbar { height: 57px; flex: none; display: flex; padding-left: 27px; background: #f1f3f6; border-bottom: 2px solid #dcdcdc; box-shadow: inset 0 -2px #f1f1f1, inset 0 -4px #b2b3b5; font: 28px/55px Inter, sans-serif; color: #63666a; }
.lock { width: 18px; height: 22px; margin-top: 17px; }
.url { margin-left: 23px; white-space: nowrap; letter-spacing: -.015px; }
.url b { font-weight: 400; color: #202124; }
.viewport { flex: 1; display: flex; }
.page { width: 2850px; padding: 127px 0 0 273px; }
.scroll { flex: 1; background: #fafafa; border-left: 2px solid #e8e8e8; }

/* card */
.card { width: 2304px; height: 1272px; display: flex; border-radius: 12px; background: #fff; box-shadow: 0 4px 12px rgba(0,0,0,.25), 0 0 3px rgba(0,0,0,.12); }
.main { width: 1728px; display: flex; flex-direction: column; }
.logo { width: 800px; height: 300px; margin: 9px 0 0 467px; }
.head { display: flex; justify-content: space-between; margin: 95px 63px 0 43px; height: 60px; }
.head h2 { font-size: 46.600px; line-height: 62px; color: #0f7899; }
.printer { width: 60px; height: 58px; margin-top: 5px; }
.msg { display: flex; margin: 37px 0 0 64px; color: #353637; }
.check { width: 50px; height: 38px; margin-top: 9px; }
.msg p { margin-left: 12px; font-size: 30.200px; font-weight: 600; line-height: 44px; white-space: nowrap; }
.details { display: grid; grid-template-columns: 543px 600px; row-gap: 47px; margin: 48px 0 0 61px; font-size: 31px; line-height: 44px; white-space: nowrap; }
.row { display: flex; gap: 17px; }
.v { color: #2f3031; }
.sum { margin-top: 8px; font-size: 62px; line-height: 70px; color: #16794d; }
.acct { margin-top: 11px; }
.payer { display: flex; margin-top: 8px; }
.visa { width: 96px; height: 34px; margin: 32px 18px 0 4px; overflow: visible; }
.name { line-height: 43px; }
.last4 { font-size: 24.700px; line-height: 33px; color: #77787a; }
.foot { display: flex; margin: auto 0 16px 43px; }
.badge { width: 264px; margin-right: 17px; }
.links { display: flex; gap: 17px; margin: 33px 0 0 34px; font-size: 24.870px; line-height: 44px; white-space: nowrap; }

.side { width: 576px; display: flex; flex-direction: column; align-items: flex-start; padding: 285px 0 16px 35px; font-size: 27.950px; line-height: 43px; white-space: nowrap; background: linear-gradient(90deg, #f1f1f1, #fafafa 10px, #fff 22px); border-radius: 0 12px 12px 0; }
.side h3 { font-size: 27.900px; line-height: 44px; color: #0f7899; }
.side .second { margin-top: 41px; }
.side p { margin-top: 18px; line-height: 43.200px; }
.btn { height: 69px; border: 0; border-bottom: 4px solid #515255; border-radius: 8px; padding: 0; background: #69696d; color: #fff; font: 500 30.300px/68px "Noto Sans CJK SC", sans-serif; white-space: nowrap; }
.b1 { width: 385px; margin-top: 36px; }
.b2 { width: 230px; margin-top: 19px; }
.legal { margin-top: auto; width: 506px; display: flex; flex-direction: column; align-items: center; }
.epic { width: 224px; height: 32px; overflow: visible; }
.lic { font-size: 17px; line-height: 44px; text-align: center; }

/* dock */
.dock {
  position: relative; z-index: 2; width: 2763px; height: 94px; margin: 4px 0 0 59px; padding-left: 5px; display: flex; border-radius: 28px;
  background: linear-gradient(90deg, #93a06c 0, #a1a56c 12%, #a5a76b 24%, #9aa577 29%, #88a982 38%, #8caa86 47%, #a3a878 56%, #b4a469 65%, #84a681 71%, #9ca57a 78%, #86a87f 86%, #86ad68 92%, #90ba70 100%);
  box-shadow: 0 0 0 1px rgba(0,0,0,.2), inset 0 0 0 1.500px rgba(255,255,255,.25), 0 0 80px rgba(0,0,0,.27);
}
.dock svg { width: 76.645px; height: 94px; overflow: visible; }
.run { fill: #1d2a05; }
.glyph { fill: #fff; font-family: "Open Sans", sans-serif; font-weight: 700; }
.sep { width: 2px; height: 70px; margin: 12px 16px; background: #5b8444; flex: none; }
```
